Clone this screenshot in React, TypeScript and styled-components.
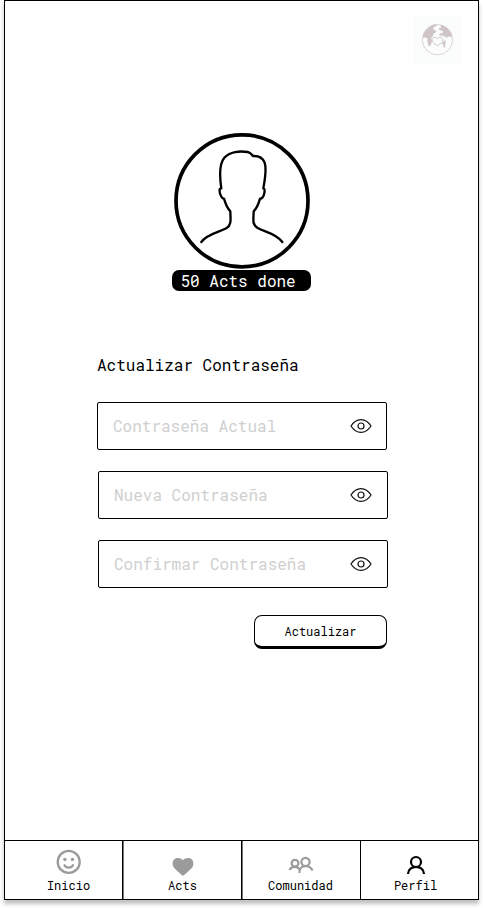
import React from 'react';
import styled, { createGlobalStyle } from 'styled-components';

const GlobalStyle = createGlobalStyle`
  * { box-sizing: border-box; }
  body {
    margin: 0;
    background: #fff;
    color: #000;
    font-family: 'Roboto Mono', 'DejaVu Sans Mono', 'Liberation Mono', monospace;
  }
`;

const Page = styled.main`
  min-height: 908px;
  padding: 0 4px 8px;
  background: #fff;
`;

const Screen = styled.div`
  width: 475px;
  height: 900px;
  border: 1px solid #000;
  background: #fff;
  box-shadow: 0 4px 4px rgba(0, 0, 0, 0.25);
  display: flex;
  flex-direction: column;
`;

const Header = styled.header`
  display: flex;
  justify-content: flex-end;
  padding: 15px 17px 0 0;
`;

const GlobeBox = styled.div`
  width: 48px;
  height: 48px;
  background: #fafdfc;
  svg { display: block; }
`;

const Profile = styled.section`
  margin-top: 69px;
  display: flex;
  flex-direction: column;
  align-items: center;
  svg { display: block; }
`;

const Badge = styled.div`
  width: 139px;
  height: 21px;
  margin: 1px 0 0 -1px;
  padding-left: 9px;
  border-radius: 7px;
  background: #000;
  color: #fff;
  font-size: 16px;
  line-height: 21px;
  white-space: nowrap;
`;

const Form = styled.form`
  width: 291px;
  margin: 63px 0 0 92px;
  display: flex;
  flex-direction: column;
`;

const Title = styled.h1`
  margin: 0 0 27px;
  font-size: 16px;
  font-weight: 400;
  line-height: 21px;
`;

const Field = styled.div<{ $indent?: boolean }>`
  width: 290px;
  height: 48px;
  margin: 0 0 21px ${(p) => (p.$indent ? 1 : 0)}px;
  padding: 0 ${(p) => (p.$indent ? 15 : 14)}px 0 15px;
  border: 1px solid #000;
  border-radius: 2px;
  display: flex;
  align-items: center;
  justify-content: space-between;
  color: #cfcfcf;
  font-size: 16px;
`;

const Placeholder = styled.span`
  padding-bottom: 2px;
`;

const Button = styled.button`
  width: 133px;
  height: 34px;
  margin: 6px 1px 0 0;
  padding: 0;
  align-self: flex-end;
  border: 1px solid #000;
  border-bottom-width: 3px;
  border-radius: 8px;
  background: #fff;
  color: #000;
  font: inherit;
  font-size: 12px;
`;

const Nav = styled.nav`
  height: 59px;
  margin-top: auto;
  border-top: 1px solid #000;
  display: grid;
  grid-template-columns: 118px 119px 119px 1fr;
`;

const Tab = styled.div<{ $left: number; $right: number; $soft: boolean }>`
  padding: 0 ${(p) => p.$right}px 6px ${(p) => p.$left}px;
  border-right: 1px solid #000;
  box-shadow: ${(p) => (p.$soft ? '1px 0 0 #777' : 'none')};
  display: flex;
  flex-direction: column;
  align-items: center;
  justify-content: flex-end;
  font-size: 12px;
  line-height: 16px;
  &:last-child { border-right: 0; }
  svg { display: block; }
`;

const Globe = () => (
  <svg width="48" height="48" viewBox="-9 -7 144 144">
    <circle cx="64.500" cy="64" r="45.500" fill="none" stroke="#d3c9c9" strokeWidth="2.400" />
    <g fill="#cfc5c6">
      <path d="M20 60C22 38 38 21 58 18L66 20C60 23 55 25 53 28C47 31 58 35 62 39C60 43 50 45 51 54C44 58 46 62 48 68C46 76 44 84 39 84C35 76 33 68 35 62C31 58 26 56 20 60z" />
      <path d="M70 19C90 21 106 36 109 57C103 53 98 54 92 58C86 56 82 50 72 52C68 48 70 45 75 45C82 46 84 36 76 37C70 36 66 33 70 29C76 30 78 24 70 19z" />
      <path d="M78 74L88 64C91 72 86 78 88 84L84 90C84 82 80 80 78 74z" />
    </g>
    <path
      d="M64 82C54 76 48 71 48 64C48 56 59 54 64 61C69 54 81 56 81 64C81 71 74 76 64 82z"
      fill="#fafdfc"
      stroke="#cfc5c6"
      strokeWidth="2.800"
    />
  </svg>
);

const Avatar = () => (
  <svg width="136" height="136" viewBox="27 24 408 408" fill="none" stroke="#000" strokeLinecap="round" strokeLinejoin="round">
    <circle cx="231" cy="227.500" r="198" strokeWidth="11" />
    <path
      strokeWidth="7"
      d="M109 351C126 326 165 321 185 309C201 299 196 280 196 259C187 250 181 235 177 221C168 221 163 202 164 194C164 190 168 190 169 190C163 150 162 117 178 98C194 80 225 77 248 81C258 83 260 89 264 93C281 92 293 98 299 113C306 135 299 165 295 190C300 190 299 198 298 205C296 216 290 222 285 221C281 236 275 250 266 259C266 281 260 299 278 309C299 321 334 325 352 351"
    />
  </svg>
);

const Eye = () => (
  <svg width="22" height="16" viewBox="0 0 22 16" fill="none" stroke="#111" strokeWidth="1.2">
    <path d="M1 8C3.500 4 7 1.600 11 1.600S18.500 4 21 8C18.500 12 15 14.400 11 14.400S3.500 12 1 8z" />
    <circle cx="11" cy="8" r="3" />
  </svg>
);

const Smile = () => (
  <svg width="26" height="28" viewBox="0 0 26 28" fill="none" stroke="#9b9b9b">
    <circle cx="12.700" cy="12.900" r="11" strokeWidth="2.300" />
    <path d="M8.500 16.200c1.500 3.100 6.900 3.100 8.400 0" strokeWidth="2.200" strokeLinecap="round" />
    <circle cx="8.900" cy="10.400" r="1.700" fill="#9b9b9b" stroke="none" />
    <circle cx="16.500" cy="10.400" r="1.700" fill="#9b9b9b" stroke="none" />
  </svg>
);

const Heart = () => (
  <svg width="22" height="20" viewBox="0 0 22 20">
    <path
      fill="#9b9b9b"
      d="M11 18.700C10 18.700 3 12 1.500 10C-.5 6.500 1 1 5.700 1C8.200 1 9.800 1.700 11 3.300C12.200 1.700 13.800 1 16.300 1C21 1 22.500 6.500 20.500 10C19 12 12 18.700 11 18.700z"
    />
  </svg>
);

const People = () => (
  <svg width="26" height="21" viewBox="0 0 26 21" fill="none" stroke="#9b9b9b" strokeWidth="2.200">
    <circle cx="7" cy="7.300" r="3.400" />
    <circle cx="17.500" cy="5.900" r="4.100" />
    <path d="M1.500 14C3 10.500 9 9.500 11.500 13.500M11.500 17C10.500 8.500 22 8 24.500 14.500" />
  </svg>
);

const Person = () => (
  <svg width="20" height="22" viewBox="0 0 20 22" fill="none" stroke="#000" strokeWidth="2.200">
    <circle cx="10" cy="7" r="5" />
    <path d="M2 19C2 9.500 18 9.500 18 19" />
  </svg>
);

const fields = ['Contraseña Actual', 'Nueva Contraseña', 'Confirmar Contraseña'];

const tabs = [
  { label: 'Inicio', icon: <Smile />, left: 10, right: 0, soft: true },
  { label: 'Acts', icon: <Heart />, left: 1, right: 0, soft: true },
  { label: 'Comunidad', icon: <People />, left: 0, right: 1, soft: false },
  { label: 'Perfil', icon: <Person />, left: 0, right: 8, soft: false },
];

export default function App() {
  return (
    <>
      <GlobalStyle />
      <Page>
        <Screen>
          <Header>
            <GlobeBox><Globe /></GlobeBox>
          </Header>
          <Profile>
            <Avatar />
            <Badge>50 Acts done</Badge>
          </Profile>
          <Form>
            <Title>Actualizar Contraseña</Title>
            {fields.map((label, i) => (
              <Field key={label} $indent={i > 0}>
                <Placeholder>{label}</Placeholder>
                <Eye />
              </Field>
            ))}
            <Button type="button">Actualizar</Button>
          </Form>
          <Nav>
            {tabs.map((t) => (
              <Tab key={t.label} $left={t.left} $right={t.right} $soft={t.soft}>
                {t.icon}
                {t.label}
              </Tab>
            ))}
          </Nav>
        </Screen>
      </Page>
    </>
  );
}
